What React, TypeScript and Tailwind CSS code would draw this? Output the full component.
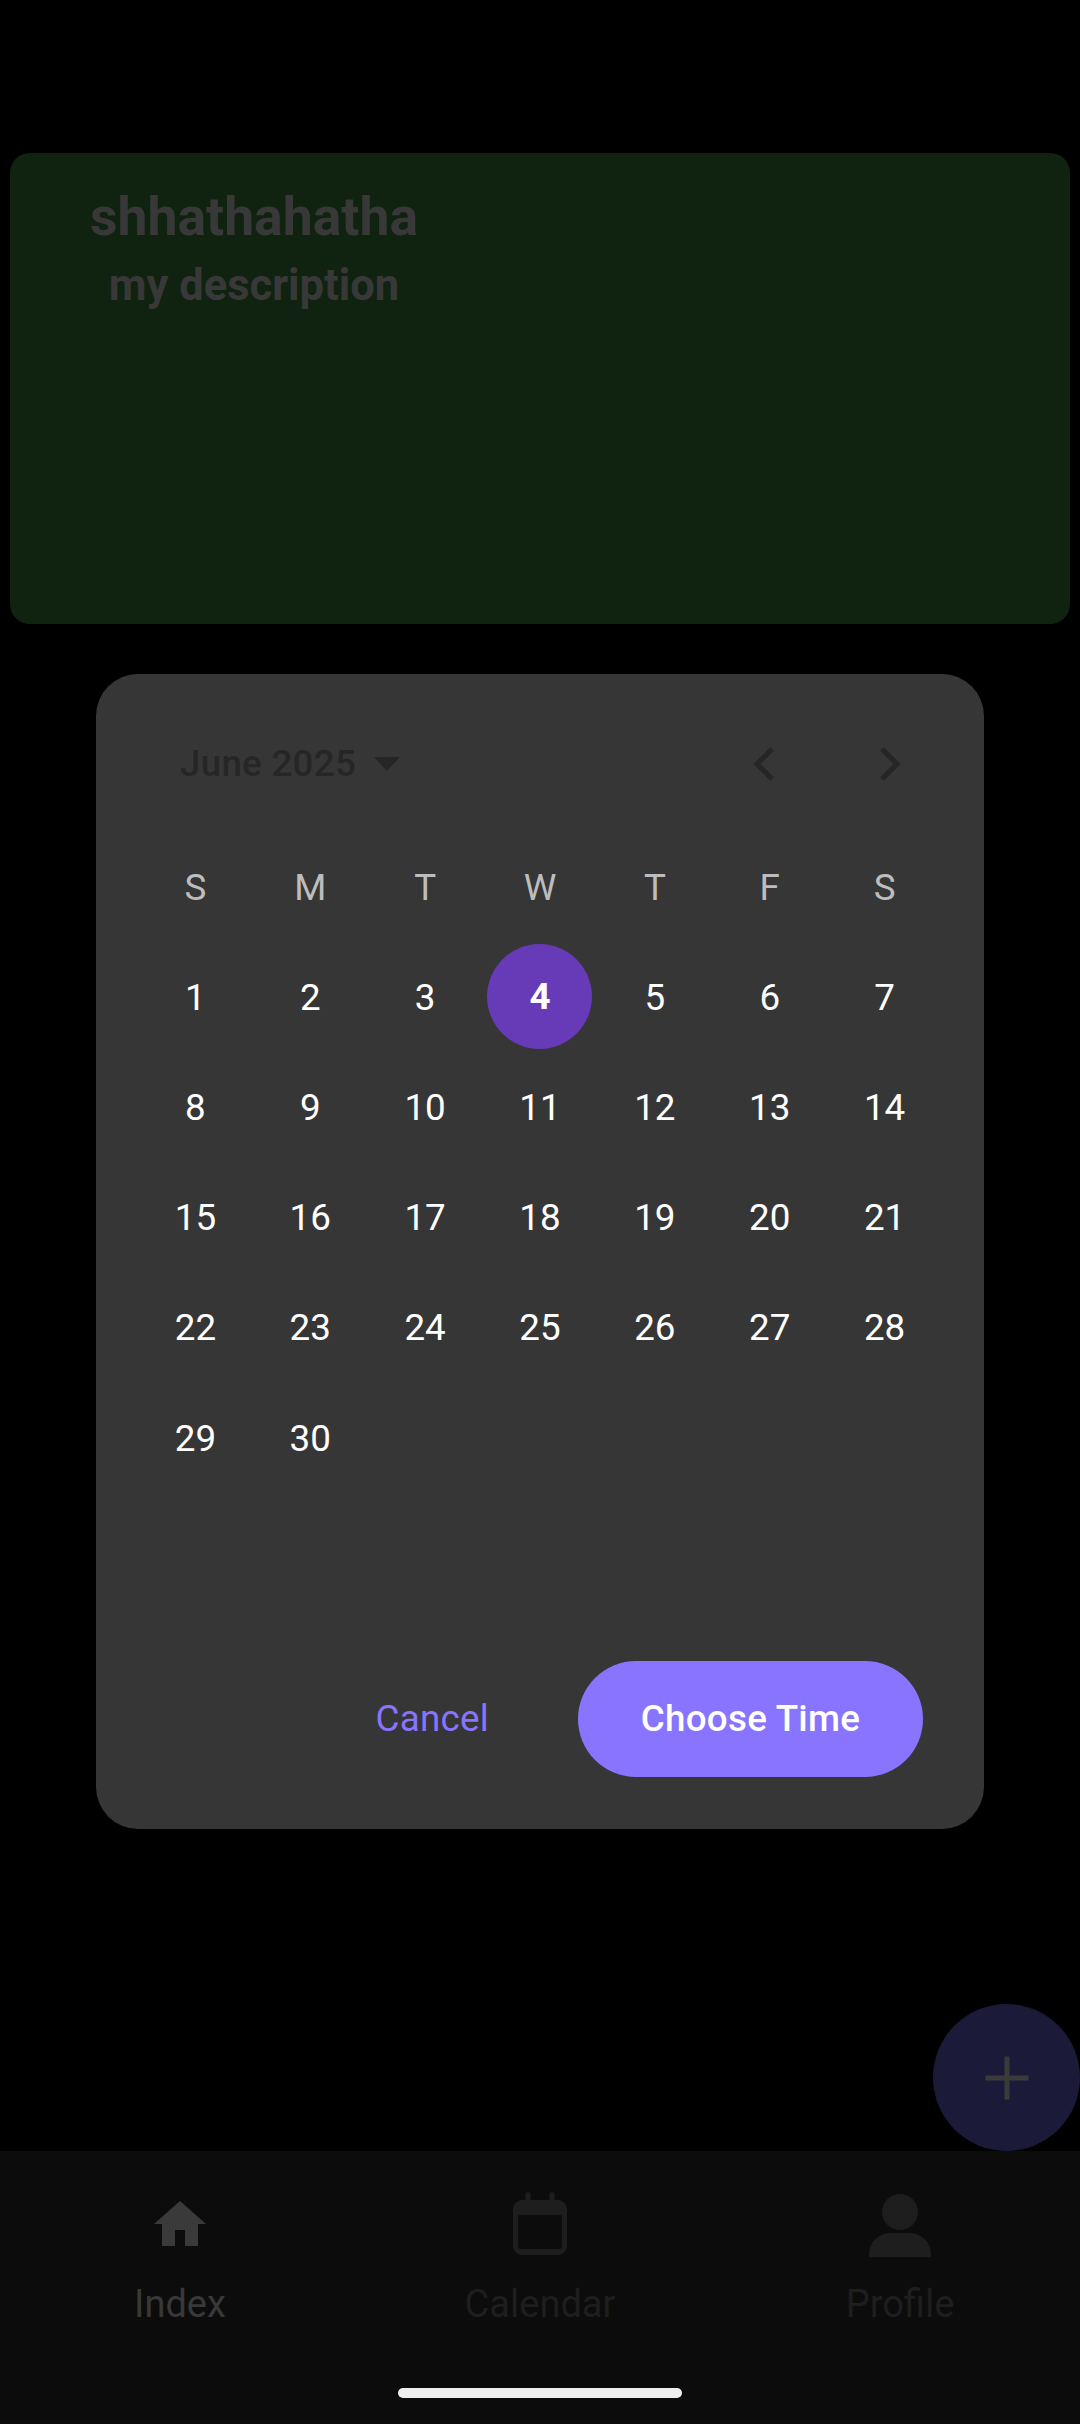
import React from "react";

const font = { fontFamily: "Roboto, sans-serif" };

const weekDays = ["S", "M", "T", "W", "T", "F", "S"];
const days = Array.from({ length: 30 }, (_, i) => i + 1);

const HomeIcon = () => (
  <svg width="80" height="76" viewBox="0 0 80 76" fill="#3a3a3a">
    <path d="M40 13L66 36H58V58H45V42H35V58H22V36H14Z" />
  </svg>
);

const CalendarIcon = () => (
  <svg width="80" height="76" viewBox="0 0 80 76" fill="#1e1e1e">
    <rect x="25.5" y="4" width="5" height="12" rx="2.5" />
    <rect x="49.5" y="4" width="5" height="12" rx="2.5" />
    <path
      fillRule="evenodd"
      d="M22 12H58A9 9 0 0 1 67 21V58A9 9 0 0 1 58 67H22A9 9 0 0 1 13 58V21A9 9 0 0 1 22 12ZM20 27A2 2 0 0 0 18 29V59A2 2 0 0 0 20 61H60A2 2 0 0 0 62 59V29A2 2 0 0 0 60 27Z"
    />
  </svg>
);

const PersonIcon = () => (
  <svg width="80" height="76" viewBox="0 0 80 76" fill="#1e1e1e">
    <circle cx="40" cy="24" r="18" />
    <path d="M9 69V66C9 54 19 45 31 45H49C61 45 71 54 71 66V69Z" />
  </svg>
);

const NavItem = ({ icon, label, color }: { icon: React.ReactNode; label: string; color: string }) => (
  <div className="flex flex-1 flex-col items-center">
    <div className="flex h-[76px] items-center justify-center">{icon}</div>
    <span className={`mt-[17px] text-[38px] leading-[46px] ${color}`}>{label}</span>
  </div>
);

export default function App() {
  return (
    <div className="relative flex h-[2424px] w-[1080px] flex-col overflow-hidden bg-black" style={font}>
      <div className="mx-[10px] mt-[153px] h-[471px] shrink-0 rounded-[20px] bg-[#102311] pl-[80px] pt-[28px]">
        <div className="inline-flex flex-col items-center text-[#383838]">
          <h1 className="text-[53.5px] font-bold leading-[72px]">shhathahatha</h1>
          <p className="mt-[8px] text-[43.5px] font-bold leading-[50px]">my description</p>
        </div>
      </div>

      <div className="mx-[96px] mt-[50px] h-[1155px] shrink-0 rounded-[42px] bg-[#363636] px-[42px] pt-[60px]">
        <div className="flex h-[60px] items-center pl-[42px]">
          <span className="text-[36.75px] font-medium leading-[60px] tracking-[0.26px] text-[#262626]">June 2025</span>
          <svg className="ml-[18px]" width="26" height="14" viewBox="0 0 26 14" fill="#262626">
            <path d="M0 0h26L13 14z" />
          </svg>
          <div className="ml-auto flex items-center gap-[100px] pr-[39px]">
            <svg width="26" height="36" viewBox="0 0 26 36" fill="none" stroke="#262626" strokeWidth="5">
              <path d="M21 3L6 18l15 15" />
            </svg>
            <svg width="26" height="36" viewBox="0 0 26 36" fill="none" stroke="#262626" strokeWidth="5">
              <path d="M5 3l15 15L5 33" />
            </svg>
          </div>
        </div>

        <div className="mt-[64px] grid grid-cols-7">
          {weekDays.map((d, i) => (
            <div key={i} className="flex h-[60px] items-center justify-center text-[36.75px] text-[#bdbdbd]">
              {d}
            </div>
          ))}
        </div>

        <div className="mt-[24px] grid grid-cols-7 auto-rows-[110.25px]">
          {days.map((d) => (
            <div key={d} className="flex items-center justify-center">
              {d === 4 ? (
                <span className="mb-[2px] flex h-[105px] w-[105px] items-center justify-center rounded-full bg-[#673ab7] text-[36.75px] font-bold text-white">
                  {d}
                </span>
              ) : (
                <span className="text-[36.75px] text-white">{d}</span>
              )}
            </div>
          ))}
        </div>

        <div className="mt-[167.75px] flex items-center justify-end pr-[19px]">
          <button className="mr-[89px] text-[36.75px] tracking-[0.26px] text-[#8874ff]">Cancel</button>
          <button className="h-[116px] w-[345px] rounded-[58px] bg-[#8874ff] text-[36.75px] font-medium tracking-[0.26px] text-white">
            Choose Time
          </button>
        </div>
      </div>

      <div className="absolute right-0 top-[2004px] flex h-[147px] w-[147px] items-center justify-center rounded-full bg-[#1b1a38]">
        <svg width="66" height="66" viewBox="0 0 66 66" fill="#3a3a3a">
          <path d="M30.5 11.5h5v19h19v5h-19v19h-5v-19h-19v-5h19z" />
        </svg>
      </div>

      <div className="mt-auto flex h-[273px] flex-col bg-[#0c0c0c]">
        <div className="flex pt-[37px]">
          <NavItem icon={<HomeIcon />} label="Index" color="text-[#383838]" />
          <NavItem icon={<CalendarIcon />} label="Calendar" color="text-[#1e1e1e]" />
          <NavItem icon={<PersonIcon />} label="Profile" color="text-[#1e1e1e]" />
        </div>
        <div className="mx-auto mt-[61px] h-[10px] w-[284px] rounded-full bg-[#eeeeee]" />
      </div>
    </div>
  );
}
